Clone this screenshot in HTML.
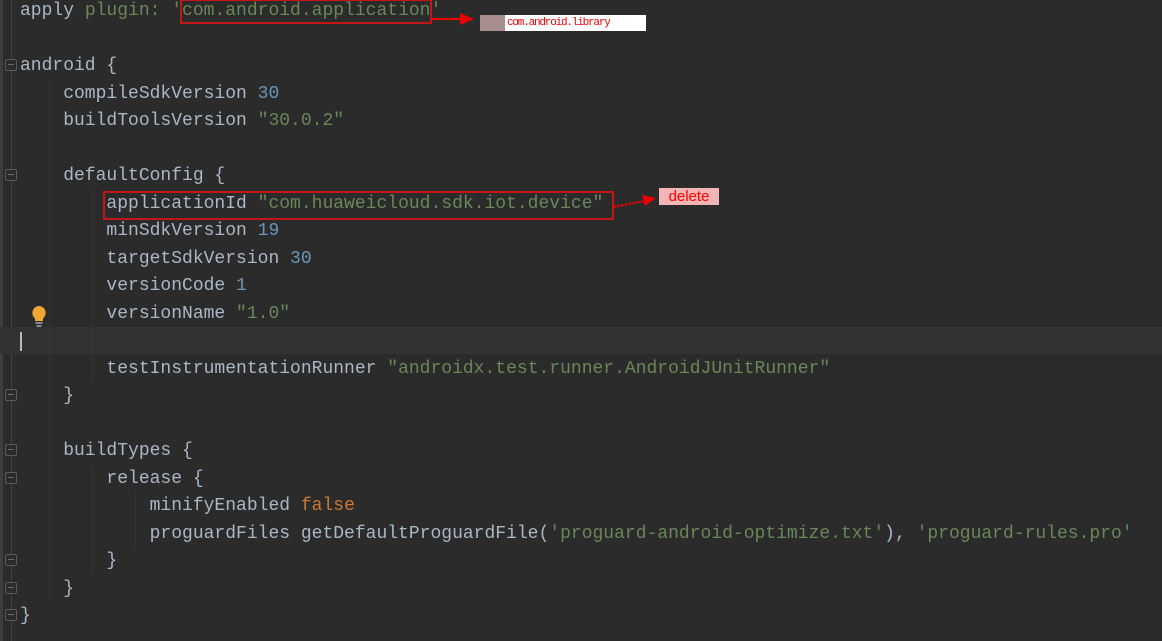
<!DOCTYPE html>
<html><head><style>
body{margin:0;width:1162px;height:641px;background:#2b2b2b;overflow:hidden;position:relative;font-family:"Liberation Mono",monospace;font-size:18px;}
.l{position:absolute;left:20px;height:27.5px;line-height:27.5px;white-space:pre;color:#a9b7c6;margin-top:2px;}
.s{color:#6a8759}.n{color:#6897bb}.k{color:#cc7832}
.f{position:absolute;left:5px;width:10px;height:10px;border:1px solid #5a5a5a;border-radius:2px;background:#2b2b2b;}
.f::after{content:"";position:absolute;left:2px;right:2px;top:4px;height:1px;background:#6a6a6a}
.g{position:absolute;width:1px;background:#353535}
.box{position:absolute;border:2px solid #c41616;box-sizing:border-box}
</style></head><body>
<div style="position:absolute;left:0;top:0;width:3px;height:641px;background:#3c3f41"></div>
<div style="position:absolute;left:11px;top:0;width:1px;height:641px;background:#444"></div>
<div style="position:absolute;left:0;top:327px;width:1162px;height:27px;background:#323232"></div>
<div style="position:absolute;left:20px;top:332px;width:2px;height:19px;background:#bbb"></div>
<div class="g" style="left:49px;top:80px;height:520px"></div>
<div class="g" style="left:92px;top:190px;height:190px"></div>
<div class="g" style="left:92px;top:465px;height:110px"></div>
<div class="g" style="left:135px;top:492px;height:55px"></div>
<div class="f" style="top:59px"></div><div class="f" style="top:169px"></div>
<div class="f" style="top:389px"></div><div class="f" style="top:444px"></div>
<div class="f" style="top:472px"></div><div class="f" style="top:554px"></div>
<div class="f" style="top:582px"></div><div class="f" style="top:609px"></div>
<svg style="position:absolute;left:29px;top:304px" width="20" height="24"><path d="M10 2a7 7 0 0 0-4 12.5V17h8v-2.5A7 7 0 0 0 10 2z" fill="#f0a732"/><rect x="6.5" y="18" width="7" height="2" fill="#888"/><rect x="7.5" y="21" width="5" height="2" fill="#888"/></svg>
<div class="l" style="top:-3.75px">apply <span class="s">plugin: 'com.android.application'</span></div>
<div class="l" style="top:51.25px">android {</div>
<div class="l" style="top:78.75px">    compileSdkVersion <span class="n">30</span></div>
<div class="l" style="top:106.25px">    buildToolsVersion <span class="s">"30.0.2"</span></div>
<div class="l" style="top:161.25px">    defaultConfig {</div>
<div class="l" style="top:188.75px">        applicationId <span class="s">"com.huaweicloud.sdk.iot.device"</span></div>
<div class="l" style="top:216.25px">        minSdkVersion <span class="n">19</span></div>
<div class="l" style="top:243.75px">        targetSdkVersion <span class="n">30</span></div>
<div class="l" style="top:271.25px">        versionCode <span class="n">1</span></div>
<div class="l" style="top:298.75px">        versionName <span class="s">"1.0"</span></div>
<div class="l" style="top:353.75px">        testInstrumentationRunner <span class="s">"androidx.test.runner.AndroidJUnitRunner"</span></div>
<div class="l" style="top:381.25px">    }</div>
<div class="l" style="top:436.25px">    buildTypes {</div>
<div class="l" style="top:463.75px">        release {</div>
<div class="l" style="top:491.25px">            minifyEnabled <span class="k">false</span></div>
<div class="l" style="top:518.75px">            proguardFiles getDefaultProguardFile(<span class="s">'proguard-android-optimize.txt'</span>), <span class="s">'proguard-rules.pro'</span></div>
<div class="l" style="top:546.25px">        }</div>
<div class="l" style="top:573.75px">    }</div>
<div class="l" style="top:601.25px">}</div>
<div class="box" style="left:180px;top:-1px;width:252px;height:25px"></div>
<div class="box" style="left:103px;top:191px;width:511px;height:29px"></div>
<svg style="position:absolute;left:0;top:0" width="1162" height="641"><line x1="432" y1="19" x2="462" y2="19" stroke="#e00" stroke-width="2"/><polygon points="460,13 474,19 460,25" fill="#e00"/><line x1="613" y1="207" x2="645" y2="201" stroke="#e00" stroke-width="2" stroke-dasharray="3,1"/><polygon points="642,195 656,198 645,206" fill="#e00"/></svg>
<div style="position:absolute;left:480px;top:15px;width:166px;height:16px;background:#fff"></div>
<div style="position:absolute;left:480px;top:15px;width:25px;height:16px;background:#a88f8f"></div>
<div style="position:absolute;left:507px;top:15px;height:16px;line-height:17px;font-family:'Liberation Mono',monospace;font-size:11px;letter-spacing:-1.2px;color:#e00;">com.android.library</div>
<div style="position:absolute;left:659px;top:188px;width:60px;height:17px;background:#f3b5b5;color:#f00;font-family:'Liberation Sans',sans-serif;font-size:15px;line-height:17px;text-align:center">delete</div>
</body></html>
